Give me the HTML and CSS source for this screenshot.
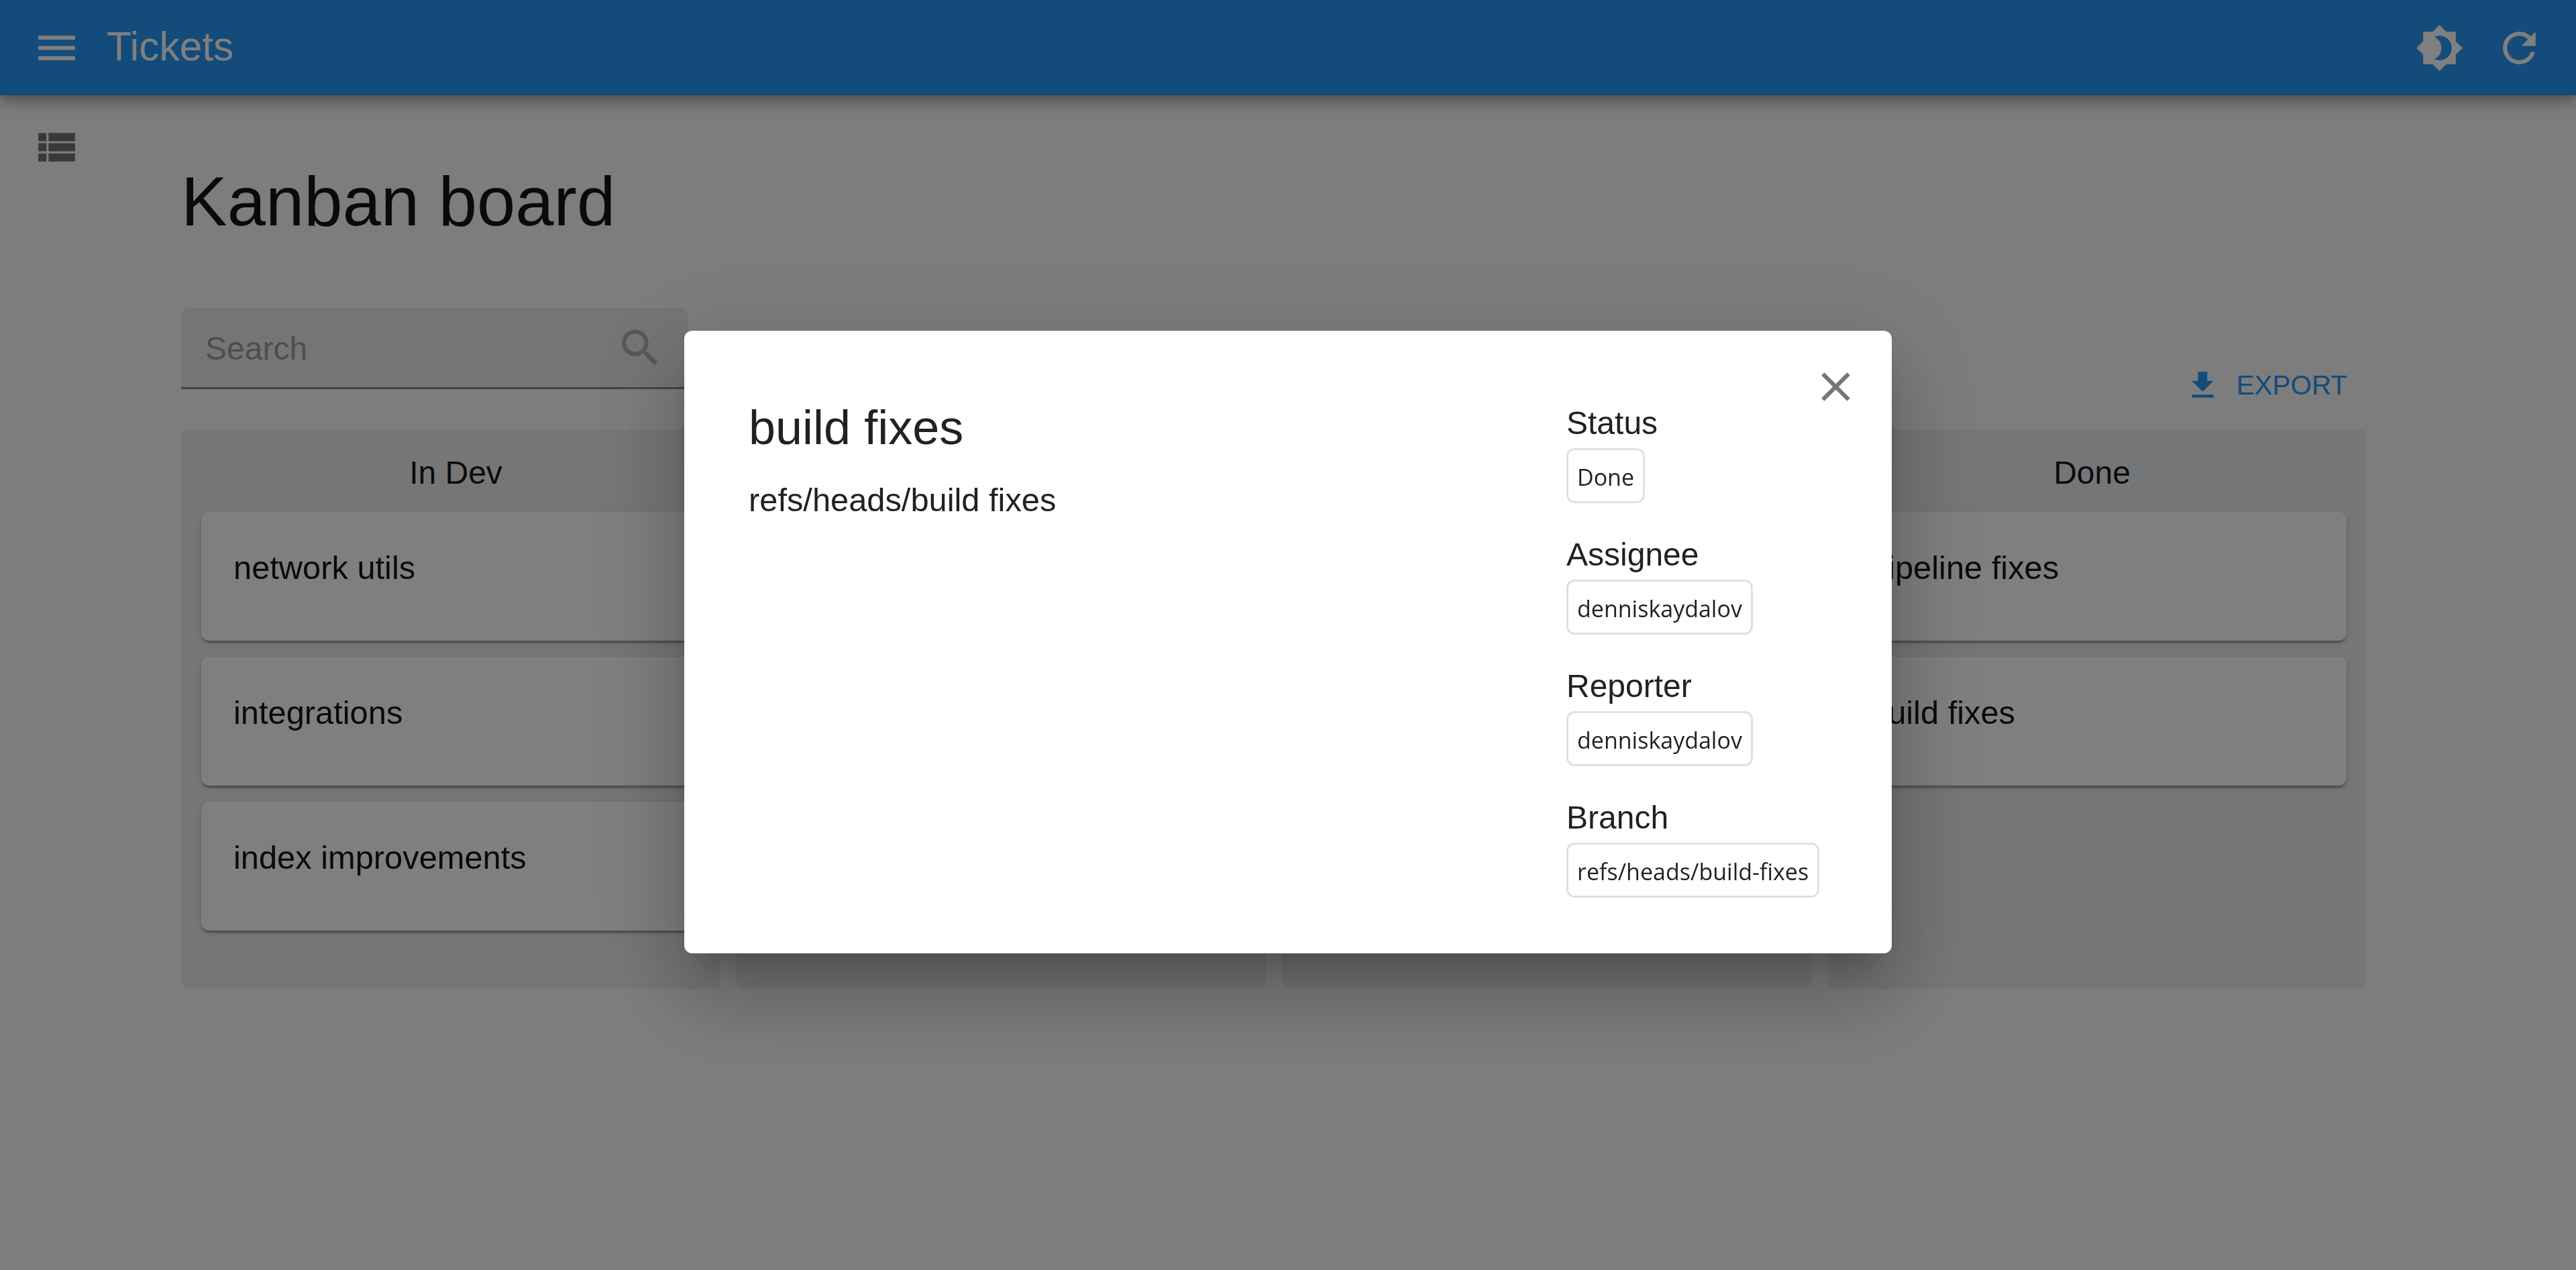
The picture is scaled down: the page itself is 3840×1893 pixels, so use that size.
FILE: index.html
```html
<!DOCTYPE html>
<html lang="en">
<head>
  <meta charset="UTF-8">
  <meta name="viewport" content="width=device-width, initial-scale=1.0">
  <title>Tickets</title>
  <link rel="stylesheet" href="styles.css">
</head>
<body>
  <header class="appbar">
    <svg class="icon appbar-menu" viewBox="0 0 24 24"><path d="M3 18h18v-2H3v2zm0-5h18v-2H3v2zm0-7v2h18V6H3z"/></svg>
    <div class="appbar-title">Tickets</div>
    <svg class="icon appbar-theme" viewBox="0 0 24 24"><path d="M20 8.69V4h-4.69L12 .69 8.69 4H4v4.69L.69 12 4 15.31V20h4.69L12 23.31 15.31 20H20v-4.69L23.31 12 20 8.69zM12 18c-.89 0-1.74-.2-2.5-.55C11.56 16.5 13 14.42 13 12s-1.44-4.5-3.5-5.45C10.26 6.2 11.11 6 12 6c3.31 0 6 2.69 6 6s-2.69 6-6 6z"/></svg>
    <svg class="icon appbar-refresh" viewBox="0 0 24 24"><path d="M17.65 6.35C16.2 4.9 14.21 4 12 4c-4.42 0-7.99 3.58-7.99 8s3.57 8 7.99 8c3.73 0 6.84-2.55 7.73-6h-2.08c-.82 2.33-3.04 4-5.65 4-3.31 0-6-2.69-6-6s2.69-6 6-6c1.66 0 3.14.69 4.22 1.78L13 11h7V4l-2.35 2.35z"/></svg>
  </header>

  <div class="page">
    <aside class="sidebar">
      <svg class="icon sidebar-icon" viewBox="0 0 24 24"><path d="M3 14h4v-4H3v4zm0 5h4v-4H3v4zM3 9h4V5H3v4zm5 5h13v-4H8v4zm0 5h13v-4H8v4zM8 5v4h13V5H8z"/></svg>
    </aside>

    <main class="content">
      <h1 class="page-title">Kanban board</h1>

      <div class="toolbar">
        <div class="search">
          <span class="search-placeholder">Search</span>
          <svg class="icon search-icon" viewBox="0 0 24 24"><path d="M15.5 14h-.79l-.28-.27C15.41 12.59 16 11.11 16 9.5 16 5.91 13.09 3 9.5 3S3 5.91 3 9.5 5.91 16 9.5 16c1.61 0 3.09-.59 4.23-1.57l.27.28v.79l5 4.99L20.49 19l-4.99-5zm-6 0C7.01 14 5 11.99 5 9.5S7.01 5 9.5 5 14 7.01 14 9.5 11.99 14 9.5 14z"/></svg>
        </div>
        <div class="export">
          <svg class="export-icon" viewBox="0 0 24 24"><path d="M19 9h-4V3H9v6H5l7 7 7-7zM5 18v2h14v-2H5z"/></svg>
          <span>EXPORT</span>
        </div>
      </div>

      <div class="board">
        <section class="column column-first">
          <div class="column-title">In Dev</div>
          <div class="card">network utils</div>
          <div class="card">integrations</div>
          <div class="card">index improvements</div>
        </section>
        <section class="column"></section>
        <section class="column"></section>
        <section class="column column-last">
          <div class="column-title">Done</div>
          <div class="card">pipeline fixes</div>
          <div class="card">build fixes</div>
        </section>
      </div>
    </main>
  </div>

  <div class="backdrop">
    <div class="modal">
      <svg class="icon modal-close" viewBox="0 0 24 24"><path d="M19 6.41L17.59 5 12 10.59 6.41 5 5 6.41 10.59 12 5 17.59 6.41 19 12 13.41 17.59 19 19 17.59 13.41 12z"/></svg>

      <div class="modal-main">
        <h2 class="modal-title">build fixes</h2>
        <p class="modal-text">refs/heads/build fixes</p>
      </div>

      <div class="modal-side">
        <div class="field">
          <div class="field-label">Status</div>
          <div class="chip">Done</div>
        </div>
        <div class="field">
          <div class="field-label">Assignee</div>
          <div class="chip">denniskaydalov</div>
        </div>
        <div class="field">
          <div class="field-label">Reporter</div>
          <div class="chip">denniskaydalov</div>
        </div>
        <div class="field">
          <div class="field-label">Branch</div>
          <div class="chip">refs/heads/build-fixes</div>
        </div>
      </div>
    </div>
  </div>
</body>
</html>
```

FILE: styles.css
```css
* {
  box-sizing: border-box;
}

html, body {
  height: 100%;
}

body {
  margin: 0;
  overflow: hidden;
  background: #fafafa;
  font-family: "Liberation Sans", Arial, sans-serif;
  color: rgba(0, 0, 0, 0.92);
}

.icon {
  display: block;
  flex: none;
  width: 73px;
  height: 73px;
  fill: currentColor;
}

/* top bar */
.appbar {
  position: relative;
  z-index: 1;
  display: flex;
  align-items: center;
  height: 142px;
  padding: 0 48px;
  background: #2697f5;
  color: #fff;
  box-shadow: 0 6px 12px -3px rgba(0, 0, 0, 0.2), 0 12px 15px 2px rgba(0, 0, 0, 0.14), 0 3px 30px 3px rgba(0, 0, 0, 0.12);
}

.appbar-title {
  flex: 1;
  margin-left: 38px;
  padding-bottom: 4px;
  font-size: 60.5px;
}

.appbar-refresh {
  margin-left: 46px;
}

/* page */
.page {
  display: flex;
}

.sidebar {
  flex: none;
  width: 270px;
  padding: 41px 0 0 48px;
}

.sidebar-icon {
  color: rgba(0, 0, 0, 0.54);
}

.content {
  flex: 1;
  padding-right: 313px;
}

.page-title {
  margin: 98px 0 97px;
  font-size: 103px;
  font-weight: 400;
  line-height: 122px;
}

.toolbar {
  display: flex;
  justify-content: space-between;
  height: 181px;
}

.search {
  display: flex;
  align-items: center;
  justify-content: space-between;
  width: 755px;
  height: 121px;
  padding: 0 34px 0 36px;
  background: rgba(0, 0, 0, 0.06);
  border-bottom: 3px solid rgba(0, 0, 0, 0.42);
  border-radius: 10px 10px 0 0;
}

.search-placeholder {
  padding-top: 3px;
  font-size: 48px;
  color: rgba(0, 0, 0, 0.35);
}

.search-icon {
  color: rgba(0, 0, 0, 0.25);
}

.export {
  display: flex;
  align-items: center;
  gap: 23px;
  align-self: flex-end;
  height: 92px;
  margin-bottom: 20px;
  padding: 0 28px;
  font-size: 40.4px;
  color: #2696f6;
}

.export-icon {
  width: 55px;
  height: 55px;
  fill: currentColor;
}

/* board */
.board {
  display: grid;
  grid-template-columns: 804px 789px 789px 803px;
  column-gap: 24px;
}

.column {
  display: flex;
  flex-direction: column;
  gap: 24px;
  height: 834px;
  padding: 0 15px;
  background: #ebecee;
  border-radius: 10px;
}

.column-first {
  padding-left: 30px;
}

.column-last {
  padding-right: 29px;
}

.column-title {
  height: 99px;
  padding-top: 36px;
  font-size: 48px;
  line-height: 58px;
  text-align: center;
}

.card {
  height: 192px;
  padding: 54px 48px;
  font-size: 48.8px;
  line-height: 58px;
  background: #fff;
  border-radius: 12px;
  box-shadow: 0 6px 3px -3px rgba(0, 0, 0, 0.2), 0 3px 3px 0 rgba(0, 0, 0, 0.14), 0 3px 9px 0 rgba(0, 0, 0, 0.12);
}

/* dialog */
.backdrop {
  position: fixed;
  inset: 0;
  z-index: 2;
  display: flex;
  justify-content: center;
  align-items: flex-start;
  padding-top: 493px;
  background: rgba(0, 0, 0, 0.5);
}

.modal {
  position: relative;
  display: flex;
  justify-content: space-between;
  width: 1800px;
  padding: 101px 0 83px 96px;
  background: #fff;
  border-radius: 12px;
  color: rgba(0, 0, 0, 0.87);
  box-shadow: 0 34px 46px -21px rgba(0, 0, 0, 0.2), 0 73px 116px 9px rgba(0, 0, 0, 0.14), 0 27px 140px 24px rgba(0, 0, 0, 0.12);
}

.modal-close {
  position: absolute;
  top: 47px;
  right: 47px;
  color: rgba(0, 0, 0, 0.54);
}

.modal-title {
  margin: 0 0 36px;
  font-size: 72px;
  font-weight: 400;
  line-height: 86px;
}

.modal-text {
  margin: 0;
  font-size: 48.8px;
  line-height: 58px;
}

.modal-side {
  width: 485px;
  padding-top: 8px;
}

.field {
  margin-bottom: 48px;
}

.field:last-child {
  margin-bottom: 0;
}

.field-label {
  margin-bottom: 8px;
  font-size: 48px;
  line-height: 58px;
}

.chip {
  display: inline-flex;
  align-items: center;
  height: 82px;
  padding: 4px 13px 0;
  font-family: "Open Sans", sans-serif;
  font-size: 34px;
  border: 3px solid #e0e0e0;
  border-radius: 12px;
}
```
